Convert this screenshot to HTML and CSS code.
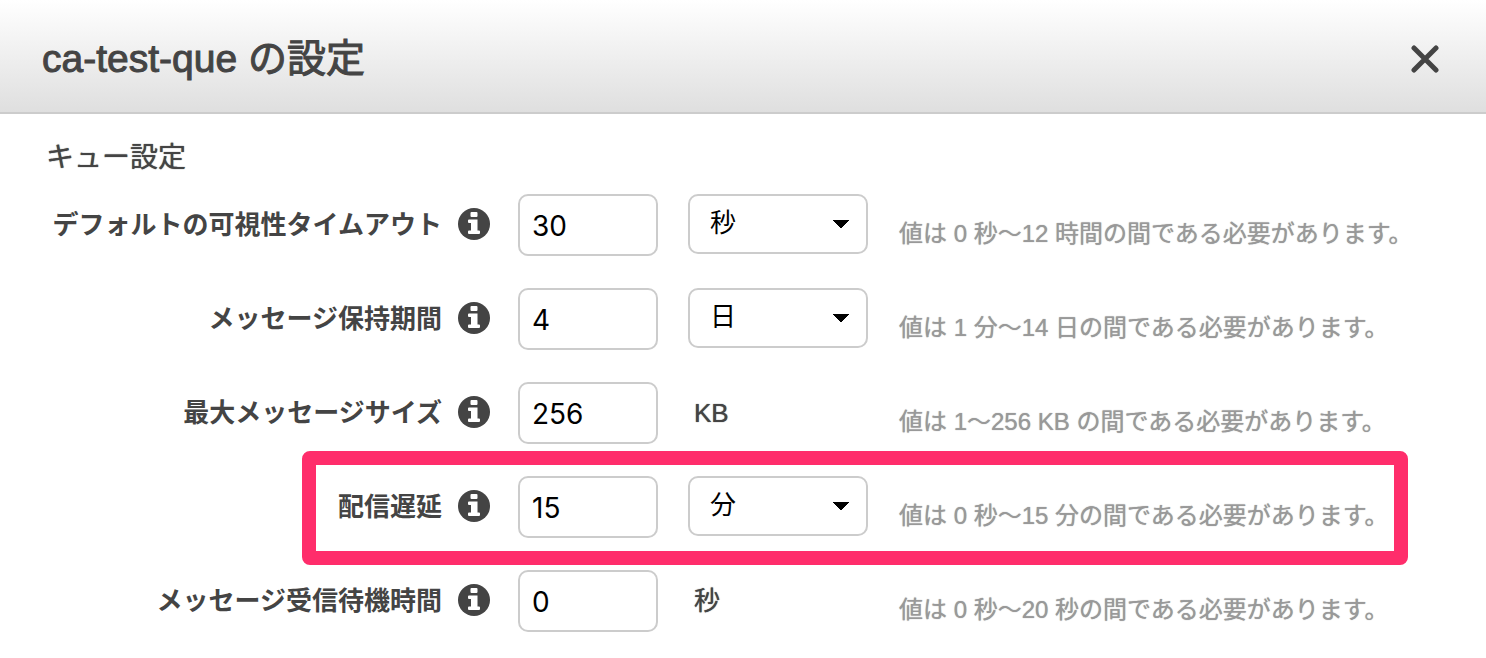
FILE: index.html
```html
<!DOCTYPE html>
<html lang="ja">
<head>
    <meta charset="UTF-8">
    <meta name="viewport" content="width=device-width, initial-scale=1.0">
    <title>ca-test-que の設定</title>
    <link rel="stylesheet" href="styles.css">
</head>
<body>

<svg class="sprite" aria-hidden="true">
    <symbol id="info" viewBox="0 0 32 32">
        <circle cx="16" cy="16" r="16" fill="#444"/>
        <path fill="#fff" d="M13.500 4h5q1 0 1 1v3q0 1-1 1h-5q-1 0-1-1v-3q0-1 1-1zM11 11.500h8.500V22.500h1.500q1 0 1 1v1.500q0 1-1 1H11q-1 0-1-1v-1.500q0-1 1-1h2V15h-2q-1 0-1-1v-1.500q0-1 1-1z"/>
    </symbol>
</svg>

<header class="dialog-header">
    <h1>ca-test-que の設定</h1>
    <button type="button" class="close" aria-label="閉じる">
        <svg width="28" height="28" viewBox="0 0 28 28"><path d="M3 3l22 22M25 3L3 25" stroke="#444" stroke-width="5" stroke-linecap="round"/></svg>
    </button>
</header>

<form class="settings">
    <h2>キュー設定</h2>

    <div class="row">
        <label for="visibility">デフォルトの可視性タイムアウト</label>
        <svg class="info"><use href="#info"/></svg>
        <input type="text" id="visibility" value="30">
        <select aria-label="可視性タイムアウトの単位"><option>秒</option></select>
        <p class="hint">値は 0 秒～12 時間の間である必要があります。</p>
    </div>

    <div class="row">
        <label for="retention">メッセージ保持期間</label>
        <svg class="info"><use href="#info"/></svg>
        <input type="text" id="retention" value="4">
        <select aria-label="保持期間の単位"><option>日</option></select>
        <p class="hint">値は 1 分～14 日の間である必要があります。</p>
    </div>

    <div class="row">
        <label for="maxSize">最大メッセージサイズ</label>
        <svg class="info"><use href="#info"/></svg>
        <input type="text" id="maxSize" value="256">
        <span class="unit">KB</span>
        <p class="hint">値は 1～256 KB の間である必要があります。</p>
    </div>

    <div class="row highlight">
        <label for="delay">配信遅延</label>
        <svg class="info"><use href="#info"/></svg>
        <input type="text" id="delay" value="15">
        <select aria-label="配信遅延の単位"><option>分</option></select>
        <p class="hint">値は 0 秒～15 分の間である必要があります。</p>
    </div>

    <div class="row">
        <label for="waitTime">メッセージ受信待機時間</label>
        <svg class="info"><use href="#info"/></svg>
        <input type="text" id="waitTime" value="0">
        <span class="unit">秒</span>
        <p class="hint">値は 0 秒～20 秒の間である必要があります。</p>
    </div>
</form>

</body>
</html>
```
FILE: styles.css
```css
* {
    box-sizing: border-box;
}
body {
    margin: 0;
    background-color: #fff;
    color: #444;
    font-family: "Liberation Sans", "Noto Sans CJK JP", sans-serif;
}
.sprite {
    display: none;
}
.dialog-header {
    display: flex;
    justify-content: space-between;
    align-items: center;
    padding: 29px 41px 23px 42px;
    border-bottom: 2px solid #ccc;
    background: linear-gradient(#fff, #dfdfdf);
}
h1 {
    margin: 0;
    font-size: 39px;
    font-weight: normal;
    line-height: 60px;
    -webkit-text-stroke: 1px #444;
}
.close {
    display: flex;
    padding: 6px;
    border: none;
    background: none;
    cursor: pointer;
}
.settings {
    padding: 24px 0 0;
}
h2 {
    margin: 0 0 16px 46px;
    font-size: 28px;
    font-weight: normal;
    line-height: 40px;
    text-shadow: 0 0 1px #444;
}
.row {
    position: relative;
    display: grid;
    grid-template-columns: 442px 48px 168px 210px 1fr;
    align-items: start;
    justify-items: end;
    margin-bottom: 24px;
}
.row:last-child {
    margin-bottom: 0;
}
label {
    font-size: 26px;
    font-weight: bold;
    line-height: 62px;
    white-space: nowrap;
}
.info {
    width: 32px;
    height: 32px;
    margin-top: 14px;
}
input,
select {
    border: 2px solid #ccc;
    border-radius: 10px;
    background-color: #fff;
    color: #000;
}
input {
    width: 140px;
    height: 62px;
    padding: 2px 12px 0;
    font: 28px "Inter", sans-serif;
}
select {
    width: 180px;
    height: 60px;
    padding: 0 20px 8px;
    appearance: none;
    font: 26px "Noto Sans CJK JP", sans-serif;
    /* drop-down arrow */
    background-image:
        linear-gradient(to bottom left, #000 50%, transparent 50%),
        linear-gradient(to bottom right, #000 50%, transparent 50%);
    background-position: right 25px top 24px, right 17px top 24px;
    background-size: 8px 9px;
    background-repeat: no-repeat;
}
.unit {
    justify-self: start;
    padding-left: 36px;
    font-size: 26px;
    line-height: 62px;
    text-shadow: 0 0 1px #444;
}
.hint {
    justify-self: start;
    margin: 10px 0 0 31px;
    color: #999;
    font-size: 24px;
    line-height: 60px;
    white-space: nowrap;
    text-shadow: 0 0 1px #999;
}
/* frame drawn over the row */
.highlight::after {
    content: "";
    position: absolute;
    top: -25px;
    bottom: -19px;
    left: 302px;
    right: 78px;
    border: 14px solid #ff2d6b;
    border-radius: 8px;
    pointer-events: none;
}
```
